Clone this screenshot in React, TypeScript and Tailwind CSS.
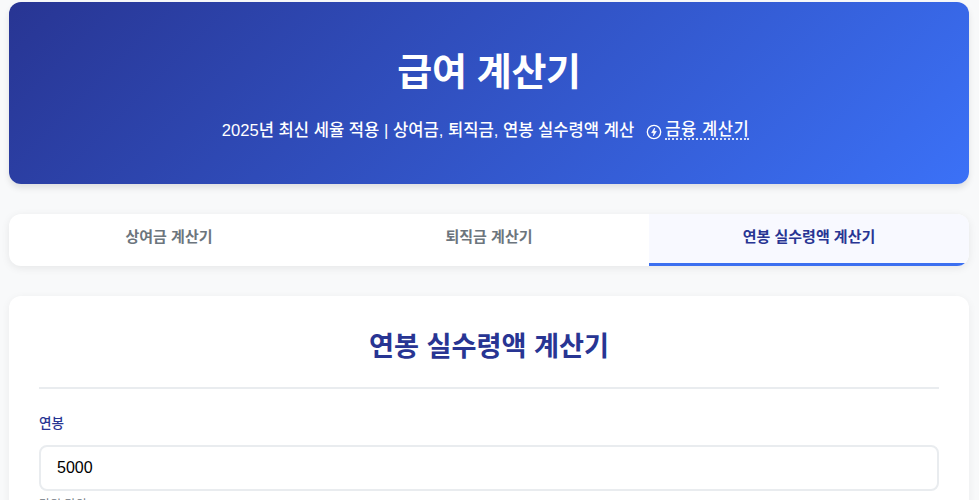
import React from "react";

const tabs = [
  { label: "상여금 계산기", active: false },
  { label: "퇴직금 계산기", active: false },
  { label: "연봉 실수령액 계산기", active: true },
];

export default function App() {
  return (
    <div className="h-[500px] overflow-hidden bg-[#f8f9fa] font-['Liberation_Sans','Noto_Sans_CJK_KR',sans-serif]">
      <div className="ml-[9px] w-[960px] pt-[2px]">
        <header className="flex h-[182px] flex-col items-center rounded-[12px] bg-[linear-gradient(135deg,#283593,#3b71f7)] pt-[41px] text-white shadow-[0_4px_6px_rgba(0,0,0,0.1)]">
          <h1 className="text-[38px] leading-[58px] font-bold tracking-[-0.3px]">급여 계산기</h1>
          <div className="mt-[17px] flex items-center pr-[7px] text-[16.6px] leading-[26px] font-medium">
            <span>2025년 최신 세율 적용 | 상여금, 퇴직금, 연봉 실수령액 계산</span>
            <span className="ml-[12px] flex items-center gap-[3px]">
              <svg className="mt-[2px]" width="16" height="16" viewBox="0 0 24 24" fill="none" stroke="currentColor" strokeWidth="2">
                <circle cx="12" cy="12" r="10" />
                <path d="M13 6 8.5 13H12l-1 5 4.5-7H12z" fill="currentColor" strokeWidth="1" strokeLinejoin="round" />
              </svg>
              <span className="border-b-2 border-dotted border-white/80 leading-[16px] tracking-[0.5px]">금융 계산기</span>
            </span>
          </div>
        </header>

        <nav className="mt-[30px] grid h-[52px] grid-cols-3 overflow-hidden rounded-[12px] bg-white shadow-[0_2px_8px_rgba(0,0,0,0.08)]">
          {tabs.map((t) => (
            <div
              key={t.label}
              className={
                t.active
                  ? "flex items-center justify-center border-b-[3px] border-[#3b6ff0] bg-[#f8f9ff] pb-[2px] text-[15px] font-semibold text-[#283593]"
                  : "flex items-center justify-center border-b-[3px] border-transparent pb-[2px] text-[15px] font-semibold text-[#6c757d]"
              }
            >
              {t.label}
            </div>
          ))}
        </nav>

        <main className="mt-[30px] rounded-[12px] bg-white px-[30px] pt-[30px] pb-[30px] shadow-[0_2px_8px_rgba(0,0,0,0.06)]">
          <h2 className="border-b-2 border-[#e9ecef] pb-[20px] text-center text-[27.2px] leading-[41px] font-bold text-[#283593]">
            연봉 실수령액 계산기
          </h2>
          <label className="mt-[25px] block text-[13.6px] leading-[20px] font-medium text-[#283593]">연봉</label>
          <div className="mt-[11px] flex h-[46px] items-center rounded-[8px] border-2 border-[#e9ecef] bg-white px-[16px] text-[16px] text-black">
            5000
          </div>
          <p className="mt-[5px] text-[12px] leading-[18px] text-[#6c757d]">만원 단위</p>
        </main>
      </div>
    </div>
  );
}
